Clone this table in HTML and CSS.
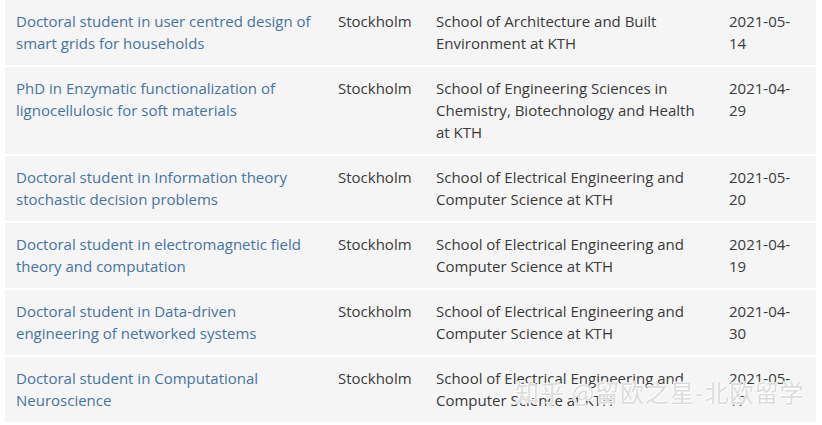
FILE: index.html
```html
<!DOCTYPE html>
<html>
<head>
<meta charset="utf-8">
<link rel="stylesheet" href="styles.css">
</head>
<body>
<div class="wrap">
<table class="jobs">
  <colgroup><col class="c-title"><col class="c-city"><col class="c-school"><col class="c-date"></colgroup>
  <tbody>
    <tr>
      <td><a href="#">Doctoral student in user centred design of smart grids for households</a></td>
      <td>Stockholm</td>
      <td>School of Architecture and Built Environment at KTH</td>
      <td>2021-05-14</td>
    </tr>
    <tr>
      <td><a href="#">PhD in Enzymatic functionalization of lignocellulosic for soft materials</a></td>
      <td>Stockholm</td>
      <td>School of Engineering Sciences in Chemistry, Biotechnology and Health at KTH</td>
      <td>2021-04-29</td>
    </tr>
    <tr>
      <td><a href="#">Doctoral student in Information theory stochastic decision problems</a></td>
      <td>Stockholm</td>
      <td>School of Electrical Engineering and Computer Science at KTH</td>
      <td>2021-05-20</td>
    </tr>
    <tr>
      <td><a href="#">Doctoral student in electromagnetic field theory and computation</a></td>
      <td>Stockholm</td>
      <td>School of Electrical Engineering and Computer Science at KTH</td>
      <td>2021-04-19</td>
    </tr>
    <tr>
      <td><a href="#">Doctoral student in Data-driven engineering of networked systems</a></td>
      <td>Stockholm</td>
      <td>School of Electrical Engineering and Computer Science at KTH</td>
      <td>2021-04-30</td>
    </tr>
    <tr>
      <td><a href="#">Doctoral student in Computational Neuroscience</a></td>
      <td>Stockholm</td>
      <td>School of Electrical Engineering and Computer Science at KTH</td>
      <td>2021-05-17</td>
    </tr>
  </tbody>
</table>
<div class="watermark">知乎 @留欧之星-北欧留学</div>
</div>
</body>
</html>
```

FILE: styles.css
```css
html, body {
  margin: 0;
  padding: 0;
  background: #ffffff;
}
body {
  font-family: "Open Sans", "Noto Sans", sans-serif;
  font-size: 15px;
  color: #3a3a3a;
}
.wrap {
  position: relative;
  padding-left: 5px;
  width: 811px;
}
.jobs {
  width: 811px;
  table-layout: fixed;
  border-collapse: collapse;
}
.c-title { width: 322px; }
.c-city { width: 98px; }
.c-school { width: 293px; }
.c-date { width: 98px; }
.jobs tr {
  background: #f5f5f5;
  border-bottom: 2px solid #ffffff;
}
.jobs td {
  vertical-align: top;
  padding: 10px 11px 11px 11px;
  line-height: 22px;
  word-break: break-word;
}
.jobs td:last-child {
  overflow-wrap: anywhere;
}
.jobs a {
  color: #4674a1;
  text-decoration: none;
}
.watermark {
  position: absolute;
  left: 515px;
  top: 374px;
  font-family: "Noto Sans CJK SC", sans-serif;
  font-size: 24px;
  letter-spacing: 1px;
  color: rgba(205, 205, 205, 0.7);
  text-shadow: 0 0 1px #fff, 1px 1px 0 rgba(255,255,255,0.85), -1px -1px 0 rgba(255,255,255,0.85);
  pointer-events: none;
  white-space: nowrap;
}
```
